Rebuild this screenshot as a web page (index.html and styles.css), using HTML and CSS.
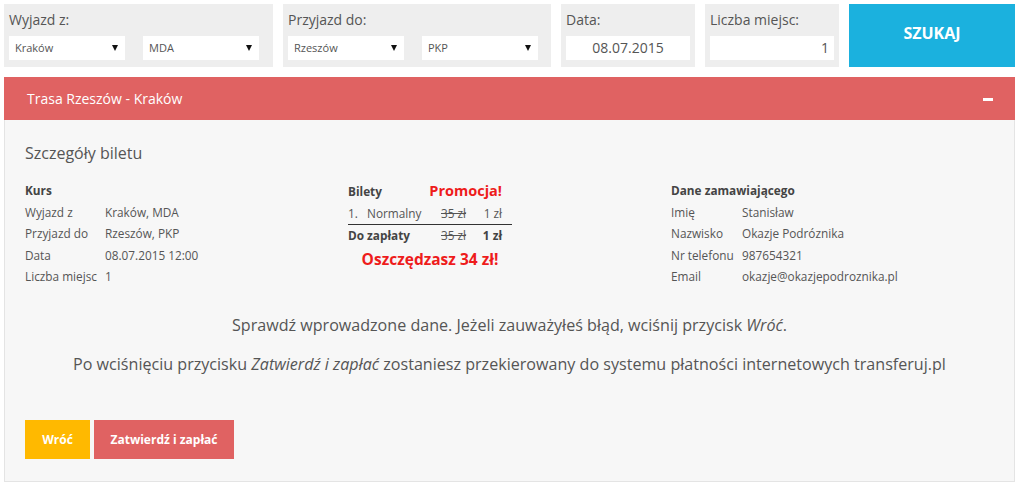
FILE: index.html
```html
<!DOCTYPE html>
<html lang="pl">
<head>
<meta charset="utf-8">
<title>Szczegóły biletu</title>
<link rel="stylesheet" href="styles.css">
</head>
<body>
<div class="page">
  <div class="search">
    <div class="group g-from">
      <div class="label">Wyjazd z:</div>
      <div class="row">
        <div class="select">Kraków<span class="arrow"></span></div>
        <div class="select">MDA<span class="arrow"></span></div>
      </div>
    </div>
    <div class="group g-to">
      <div class="label">Przyjazd do:</div>
      <div class="row">
        <div class="select">Rzeszów<span class="arrow"></span></div>
        <div class="select">PKP<span class="arrow"></span></div>
      </div>
    </div>
    <div class="group g-small">
      <div class="label">Data:</div>
      <div class="input center">08.07.2015</div>
    </div>
    <div class="group g-small">
      <div class="label">Liczba miejsc:</div>
      <div class="input right">1</div>
    </div>
    <button class="search-btn">SZUKAJ</button>
  </div>

  <div class="route-head">
    <span>Trasa Rzeszów - Kraków</span>
    <span class="minus"></span>
  </div>

  <div class="panel">
    <h2 class="title">Szczegóły biletu</h2>
    <div class="cols">
      <div class="col">
        <div class="kv kv-left">
          <div class="head">Kurs</div>
          <div>Wyjazd z</div><div>Kraków, MDA</div>
          <div>Przyjazd do</div><div>Rzeszów, PKP</div>
          <div>Data</div><div>08.07.2015 12:00</div>
          <div>Liczba miejsc</div><div>1</div>
        </div>
      </div>
      <div class="col">
        <div class="tickets">
          <div class="t-head">
            <span class="bold">Bilety</span>
            <span class="promo">Promocja!</span>
          </div>
          <div class="t-row line">
            <span>1.</span><span>Normalny</span><span class="strike">35 zł</span><span class="r">1 zł</span>
          </div>
          <div class="t-row">
            <span class="bold span2">Do zapłaty</span><span class="strike">35 zł</span><span class="r bold">1 zł</span>
          </div>
          <div class="save">Oszczędzasz 34 zł!</div>
        </div>
      </div>
      <div class="col">
        <div class="kv kv-right">
          <div class="head">Dane zamawiającego</div>
          <div>Imię</div><div>Stanisław</div>
          <div>Nazwisko</div><div>Okazje Podróznika</div>
          <div>Nr telefonu</div><div>987654321</div>
          <div>Email</div><div>okazje@okazjepodroznika.pl</div>
        </div>
      </div>
    </div>
    <p class="info first">Sprawdź wprowadzone dane. Jeżeli zauważyłeś błąd, wciśnij przycisk <em>Wróć</em>.</p>
    <p class="info">Po wciśnięciu przycisku <em>Zatwierdź i zapłać</em> zostaniesz przekierowany do systemu płatności internetowych transferuj.pl</p>
    <div class="actions">
      <button class="btn back">Wróć</button>
      <button class="btn pay">Zatwierdź i zapłać</button>
    </div>
  </div>
</div>
</body>
</html>
```

FILE: styles.css
```css
* { box-sizing: border-box; }
html, body { margin: 0; padding: 0; background: #fff; }
body {
  font-family: "Open Sans", "Noto Sans", sans-serif;
  color: #555;
}
.page { width: 1011px; margin: 4px 0 0 4px; }

.search { display: flex; gap: 10px; height: 63px; }
.group {
  background: #eeeeee;
  padding: 4px 5px 0 5px;
}
.g-from { width: 269px; }
.g-to { width: 268px; }
.g-small { width: 134px; }
.label { font-size: 14px; line-height: 24px; color: #555; }
.row { display: flex; gap: 18px; margin-top: 4px; }
.select {
  position: relative;
  width: 116px; height: 24px;
  background: #fff;
  font-size: 11px; line-height: 24px;
  padding-left: 6px;
  color: #555;
}
.arrow {
  position: absolute; right: 7px; top: 9px;
  border-left: 3px solid transparent;
  border-right: 3px solid transparent;
  border-top: 6px solid #111;
}
.input {
  height: 24px; margin-top: 4px;
  background: #fff;
  font-size: 14px; line-height: 24px;
  color: #555;
  padding: 0 5px;
}
.center { text-align: center; }
.right { text-align: right; }
.search-btn {
  width: 166px; height: 63px;
  border: 0; margin: 0;
  background: #1bb1de;
  color: #fff;
  font-family: "Open Sans", sans-serif;
  font-weight: 700; font-size: 16px;
  padding: 0 0 6px 0;
}

.route-head {
  margin-top: 10px;
  height: 43px;
  background: #e06262;
  color: #fff;
  font-size: 14px;
  display: flex; align-items: center; justify-content: space-between;
  padding: 0 22px 0 23px;
}
.minus { width: 10px; height: 3px; background: #fff; margin-top: 2px; }

.panel {
  background: #f7f7f7;
  border: 1px solid #e4e4e4;
  border-top: 0;
  padding: 21px 20px 22px 20px;
}
.title {
  margin: 0 0 15px 0;
  font-size: 16px; font-weight: 400; line-height: 24px;
  color: #555;
}
.cols { display: flex; }
.col { width: 323.5px; font-size: 11.8px; }
.kv { display: grid; line-height: 21.6px; }
.kv-left { grid-template-columns: 80px auto; }
.kv-right { grid-template-columns: 71px auto; }
.kv .head { grid-column: 1 / span 2; font-weight: 700; color: #444; }

.tickets { width: 164px; line-height: 21.6px; }
.bold { font-weight: 700; color: #444; }
.t-head { display: flex; justify-content: space-between; padding-right: 10px; align-items: baseline; }
.promo { color: #ee1c1c; font-weight: 700; font-size: 14.5px; }
.t-row {
  display: grid;
  grid-template-columns: 19px 74px 34px 27px;
  padding-right: 10px;
}
.t-row.line { border-bottom: 1px solid #333; }
.span2 { grid-column: 1 / span 2; }
.strike { text-decoration: line-through; }
.r { text-align: right; }
.save {
  text-align: center;
  color: #ee1c1c; font-weight: 700; font-size: 15.5px;
  line-height: 22px;
  padding-top: 1px;
  margin-left: -6px;
  width: 176px;
}

.info {
  margin: 15px 0 0 0;
  text-align: center;
  font-size: 16.1px; line-height: 24px;
  color: #555;
}
.info.first { margin-top: 25px; }

.actions { display: flex; gap: 4px; margin-top: 44px; }
.btn {
  border: 0; height: 39px;
  color: #fff;
  font-family: "Open Sans", sans-serif;
  font-weight: 700; font-size: 12px;
  padding: 0;
}
.back { width: 65px; background: #ffb900; }
.pay { width: 140px; background: #e06262; }
```
